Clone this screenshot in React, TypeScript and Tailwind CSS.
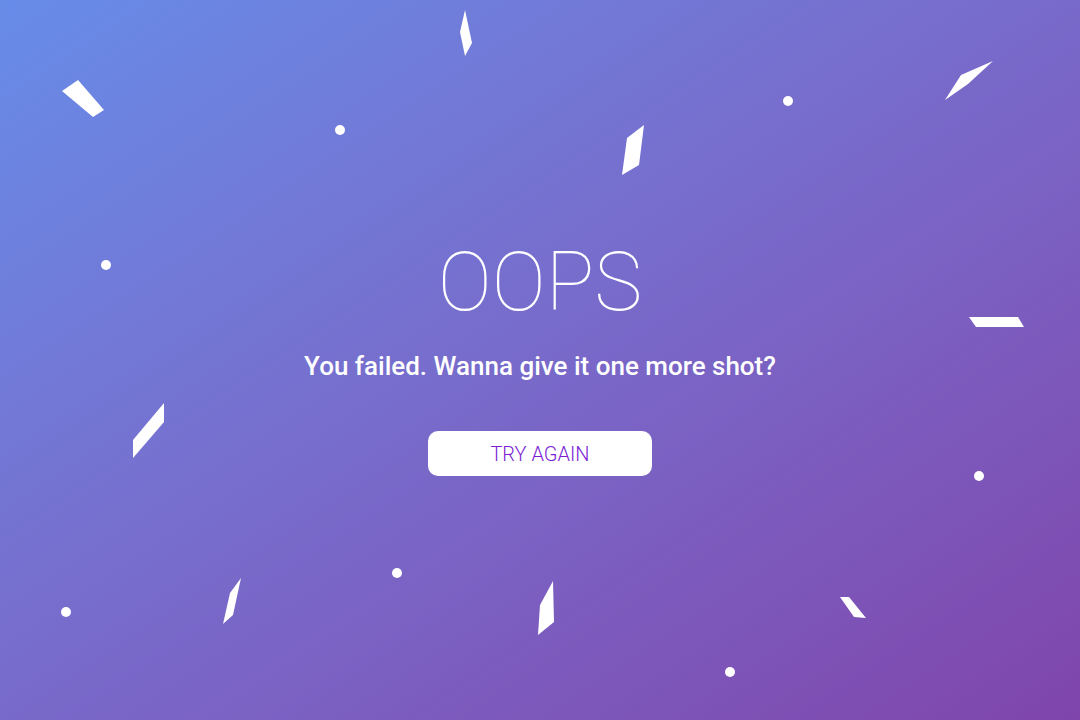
import React from "react";

type Shard = { points: string };
type Dot = { cx: number; cy: number };

const shards: Shard[] = [
  { points: "62,91 78,80 104,110 93,117" },
  { points: "465,10 472,43 465,56 460,32" },
  { points: "993,61 961,75 945,100 968,84" },
  { points: "644,125 627,138 622,175 639,165" },
  { points: "969,317 1018,317 1024,327 976,327" },
  { points: "164,403 164,422 133,458 133,440" },
  { points: "241,578 230,593 223,624 233,615" },
  { points: "553,581 540,605 538,635 554,622" },
  { points: "840,597 849,597 866,618 854,617" },
];

const dots: Dot[] = [
  { cx: 340, cy: 130 },
  { cx: 788, cy: 101 },
  { cx: 106, cy: 265 },
  { cx: 979, cy: 476 },
  { cx: 397, cy: 573 },
  { cx: 66, cy: 612 },
  { cx: 730, cy: 672 },
];

const Confetti: React.FC = () => (
  <svg
    className="absolute inset-0 pointer-events-none"
    width="1080"
    height="720"
    viewBox="0 0 1080 720"
  >
    {shards.map((s, i) => (
      <polygon key={i} points={s.points} fill="#fff" />
    ))}
    {dots.map((d, i) => (
      <circle key={i} cx={d.cx} cy={d.cy} r="5" fill="#fff" />
    ))}
  </svg>
);

export default function App() {
  return (
    <div className="relative w-[1080px] h-[720px] overflow-hidden bg-gradient-to-br from-[#668ce8] to-[#7f45ac] font-['Roboto',sans-serif]">
      <Confetti />
      <div className="relative flex flex-col items-center pt-[235px]">
        <h1 className="text-[81px] leading-[96px] font-thin text-white">
          OOPS
        </h1>
        <p className="mt-[19px] text-[26px] leading-[32px] font-medium text-white">
          You failed. Wanna give it one more shot?
        </p>
        <button className="mt-[49px] w-[224px] h-[45px] rounded-[10px] bg-white text-[#7a1dd4] text-[20px] font-light">
          TRY AGAIN
        </button>
      </div>
    </div>
  );
}
